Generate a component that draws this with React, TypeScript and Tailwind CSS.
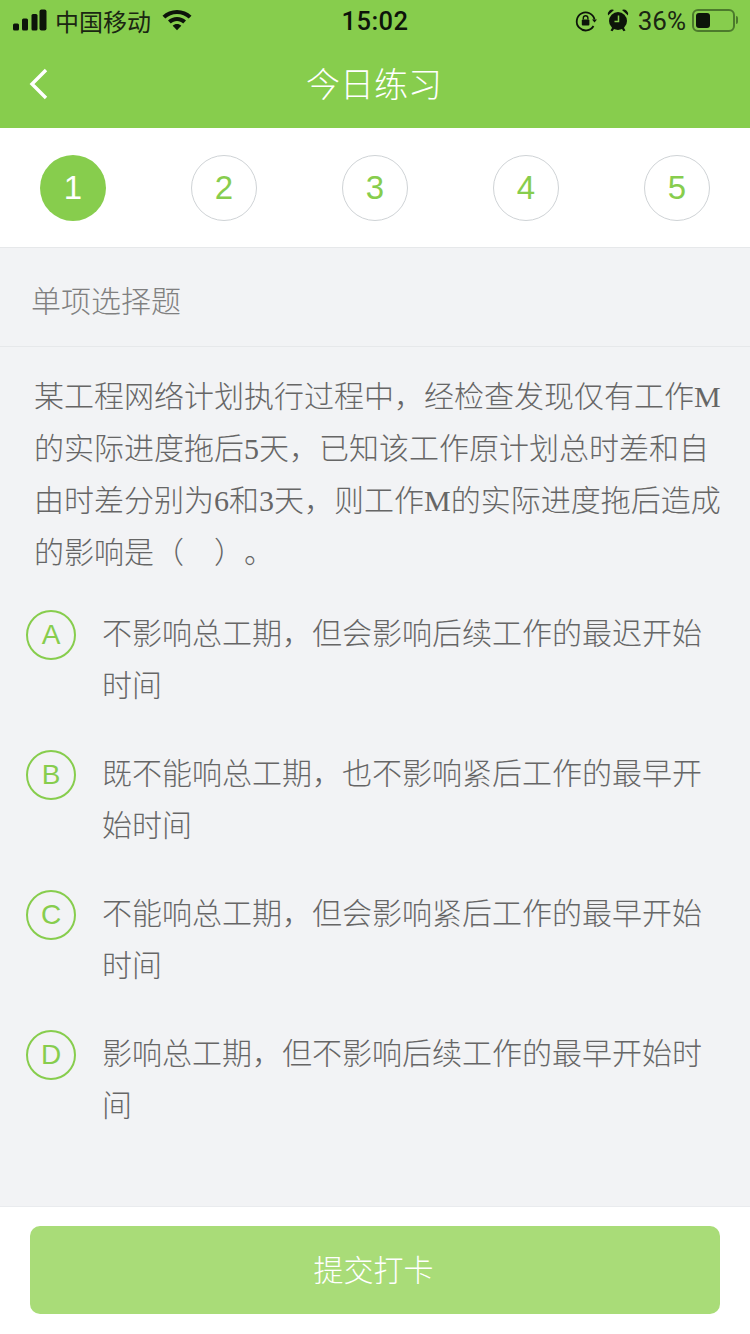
const CJK = "font-['Roboto','Noto_Sans_CJK_SC',sans-serif]";

const options = [
  { k: "A", t: "不影响总工期，但会影响后续工作的最迟开始时间" },
  { k: "B", t: "既不能响总工期，也不影响紧后工作的最早开始时间" },
  { k: "C", t: "不能响总工期，但会影响紧后工作的最早开始时间" },
  { k: "D", t: "影响总工期，但不影响后续工作的最早开始时间" },
];

function StatusBar() {
  return (
    <div className="relative flex h-[40px] items-center justify-between pl-[13px] pr-[12px] text-black">
      <div className="flex items-center">
        <svg width="34" height="22" viewBox="0 0 34 22" fill="#0d140a">
          <rect x="0" y="14.5" width="6" height="7" rx="1.5" />
          <rect x="9" y="9.5" width="6" height="12" rx="1.5" />
          <rect x="18.5" y="5" width="6" height="16.5" rx="1.5" />
          <rect x="26.5" y="0.5" width="7" height="21" rx="2" />
        </svg>
        <span className="ml-[8px] mt-[2px] font-['Noto_Sans_CJK_SC',sans-serif] text-[24px] leading-[30px] text-[#1a2612]">中国移动</span>
        <svg className="ml-[11px]" width="30" height="22" viewBox="0 0 30 22" fill="#0d140a">
          <path d="M15 1C9.4 1 4.3 3.1.5 6.7l2.8 2.9C6.3 6.7 10.4 4.9 15 4.9s8.7 1.8 11.7 4.7l2.8-2.9C25.7 3.1 20.6 1 15 1z" />
          <path d="M15 8c-3.4 0-6.6 1.3-9 3.6l2.8 2.9c1.6-1.6 3.8-2.6 6.2-2.6s4.6 1 6.2 2.6l2.8-2.9C21.6 9.3 18.4 8 15 8z" />
          <path d="M15 15c-1.7 0-3.2.6-4.3 1.7L15 21.2l4.3-4.5C18.2 15.6 16.7 15 15 15z" />
        </svg>
      </div>
      <div className="absolute left-0 right-0 top-[6px] text-center font-['Roboto',sans-serif] text-[25.5px] font-medium leading-[30px] tracking-[0.5px] text-[#0d140a]">15:02</div>
      <div className="flex items-center">
        <svg className="mt-[2px]" width="22" height="22" viewBox="0 0 22 22" fill="none" stroke="#0d140a" strokeWidth="1.8">
          <path d="M19.5 9.5A9 9 0 1 0 18.5 16" />
          <path d="M17 9.5h5l-2.5 3z" fill="#0d140a" stroke="none" />
          <rect x="6.8" y="9.5" width="7.6" height="6" rx="1" fill="#0d140a" stroke="none" />
          <path d="M8.3 9.5V8a2.3 2.3 0 0 1 4.6 0v1.5" strokeWidth="1.4" />
        </svg>
        <svg className="ml-[10px]" width="22" height="24" viewBox="0 0 22 24" fill="#0d140a">
          <circle cx="11" cy="13" r="9" />
          <path d="M1 7.5a4.6 4.6 0 0 1 6-5.6zM21 7.5a4.6 4.6 0 0 0-6-5.6z" />
          <path d="M3.5 22.5l2-3.5 2 1.2-2 3zM18.5 22.5l-2-3.5-2 1.2 2 3z" />
          <path d="M11.5 7.5v6H7.5" fill="none" stroke="#87cd4d" strokeWidth="1.5" />
        </svg>
        <span className="ml-[9px] mt-[1px] font-['Roboto',sans-serif] text-[26px] leading-[30px] text-[#1a2612]">36%</span>
        <div className="ml-[6px] flex items-center">
          <div className="flex h-[23px] w-[43px] items-center rounded-[6px] border-2 border-[#4c7a2c] p-[2px]">
            <div className="h-[15px] w-[14px] rounded-[3px] bg-[#0d140a]" />
          </div>
          <div className="ml-[1px] h-[8px] w-[2px] rounded-r-full bg-[#4c7a2c]" />
        </div>
      </div>
    </div>
  );
}

export default function App() {
  return (
    <div className={`flex h-[1334px] w-[750px] flex-col overflow-hidden bg-[#f2f3f5] ${CJK}`}>
      <div className="h-[128px] shrink-0 bg-[#87cd4d]">
        <StatusBar />
        <div className="relative flex h-[88px] items-center justify-center">
          <svg className="absolute left-[29px] top-[28px]" width="20" height="32" viewBox="0 0 20 32" fill="none" stroke="#fff" strokeWidth="3.4">
            <path d="M17 2L3 16l14 14" />
          </svg>
          <span className="pb-[3px] pr-[2px] font-['Noto_Sans_CJK_SC',sans-serif] text-[34px] font-light leading-[40px] text-white">今日练习</span>
        </div>
      </div>

      <div className="flex h-[120px] shrink-0 items-start justify-between border-b border-[#e6e8ea] bg-white px-[40px] pt-[27px]">
        {[1, 2, 3, 4, 5].map((n) => (
          <div
            key={n}
            className={
              n === 1
                ? "flex h-[66px] w-[66px] items-center justify-center rounded-full bg-[#87cd4d] font-['Liberation_Sans',sans-serif] text-[33px] text-white"
                : "flex h-[66px] w-[66px] items-center justify-center rounded-full border border-[#cfd3d6] font-['Liberation_Sans',sans-serif] text-[33px] text-[#87cd4d]"
            }
          >
            {n}
          </div>
        ))}
      </div>

      <div className="flex h-[99px] shrink-0 items-center border-b border-[#e6e8ea] pt-[4px] pl-[31px] font-['Noto_Sans_CJK_SC',sans-serif] text-[30px] font-light text-[#808080]">
        单项选择题
      </div>

      <div className="flex-1">
        <div className="pl-[34px] pr-[28px] pt-[24px] font-['Liberation_Serif','Noto_Sans_CJK_SC',serif] text-[30px] font-light leading-[52px] text-[#666] [text-spacing-trim:space-all]">
          某工程网络计划执行过程中，经检查发现仅有工作M的实际进度拖后5天，已知该工作原计划总时差和自由时差分别为6和3天，则工作M的实际进度拖后造成的影响是（&nbsp;&nbsp;&nbsp;&nbsp;）。
        </div>
        <div className="mt-[26px] flex flex-col gap-[36px] pl-[26px] pr-[46px]">
          {options.map((o) => (
            <div key={o.k} className="flex items-start">
              <div className="mt-[5px] flex h-[50px] w-[50px] shrink-0 items-center justify-center rounded-full border-2 border-[#87cd4d] font-['Liberation_Sans',sans-serif] text-[28px] text-[#87cd4d]">
                {o.k}
              </div>
              <div className="ml-[26px] font-['Noto_Sans_CJK_SC',sans-serif] text-[30px] font-light leading-[52px] text-[#666]">{o.t}</div>
            </div>
          ))}
        </div>
      </div>

      <div className="h-[128px] shrink-0 border-t border-[#e9ebee] bg-white px-[30px] pt-[19px]">
        <div className="flex h-[88px] items-center justify-center rounded-[10px] bg-[#a9dc78] pb-[3px] pr-[3px] font-['Noto_Sans_CJK_SC',sans-serif] text-[30px] font-light text-white">
          提交打卡
        </div>
      </div>
    </div>
  );
}
